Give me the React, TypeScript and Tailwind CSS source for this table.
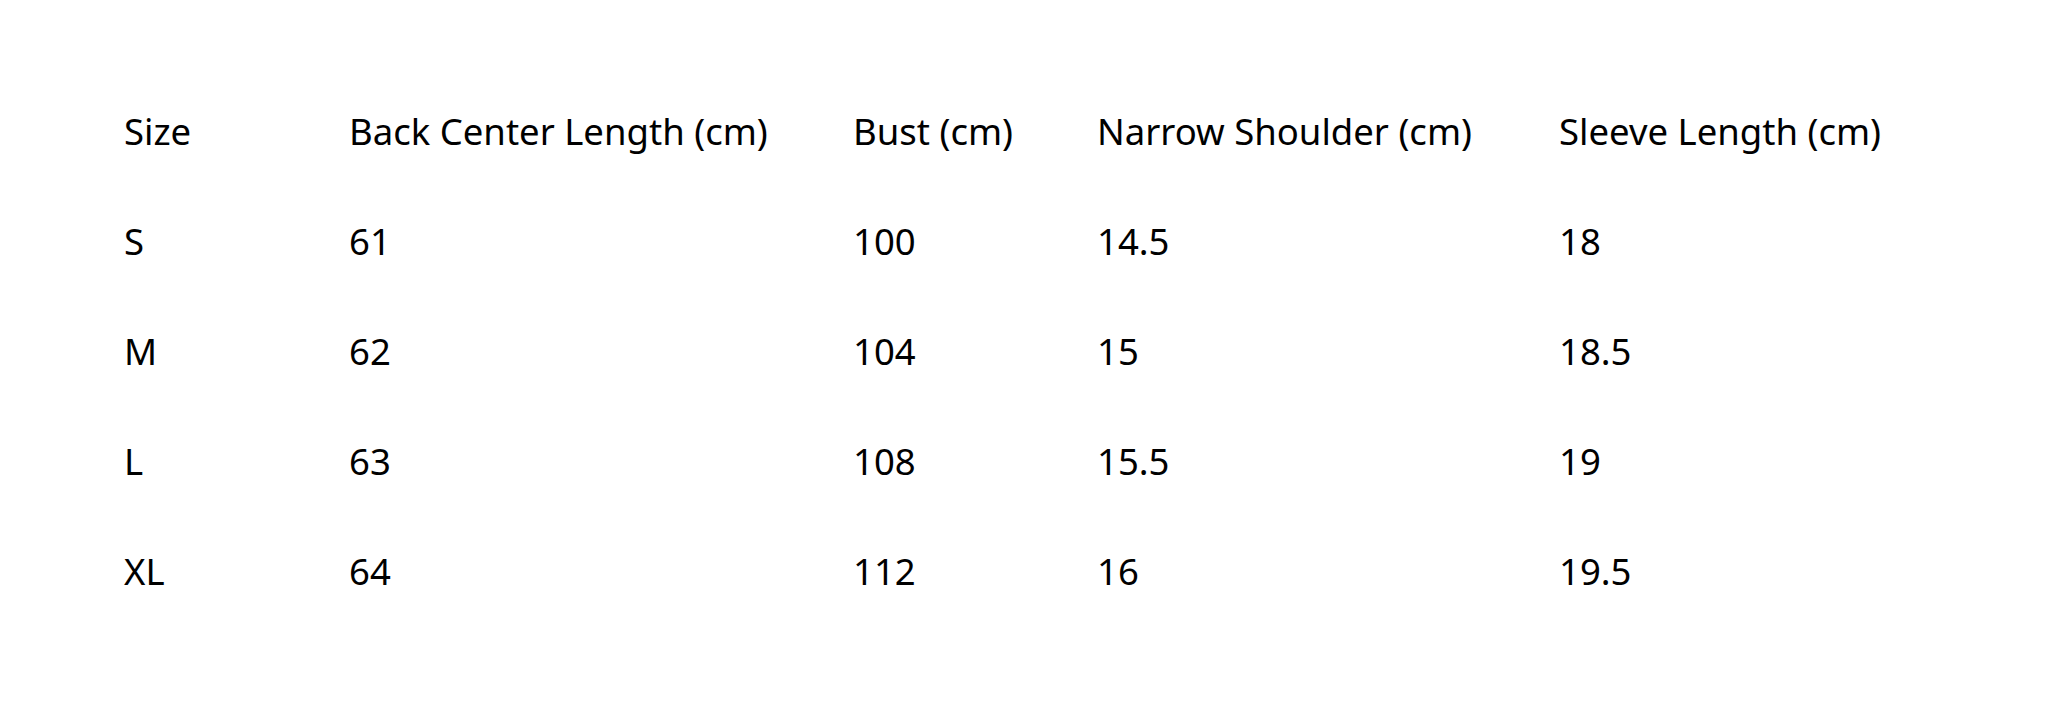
import React from 'react';

const headers = ['Size', 'Back Center Length (cm)', 'Bust (cm)', 'Narrow Shoulder (cm)', 'Sleeve Length (cm)'];

const rows = [
  ['S', '61', '100', '14.5', '18'],
  ['M', '62', '104', '15', '18.5'],
  ['L', '63', '108', '15.5', '19'],
  ['XL', '64', '112', '16', '19.5'],
];

const Row = ({ cells }: { cells: string[] }) => (
  <div className="grid grid-cols-[225px_504px_244px_462px_1fr] h-[110px] items-center">
    {cells.map((c, i) => (
      <div key={i} className="whitespace-nowrap">
        {c}
      </div>
    ))}
  </div>
);

export default function App() {
  return (
    <div className="w-[2049px] h-[726px] bg-white text-black pt-[76px] pl-[124px] text-[36.5px] leading-none font-['Noto_Sans',sans-serif]">
      <Row cells={headers} />
      {rows.map((r) => (
        <Row key={r[0]} cells={r} />
      ))}
    </div>
  );
}
